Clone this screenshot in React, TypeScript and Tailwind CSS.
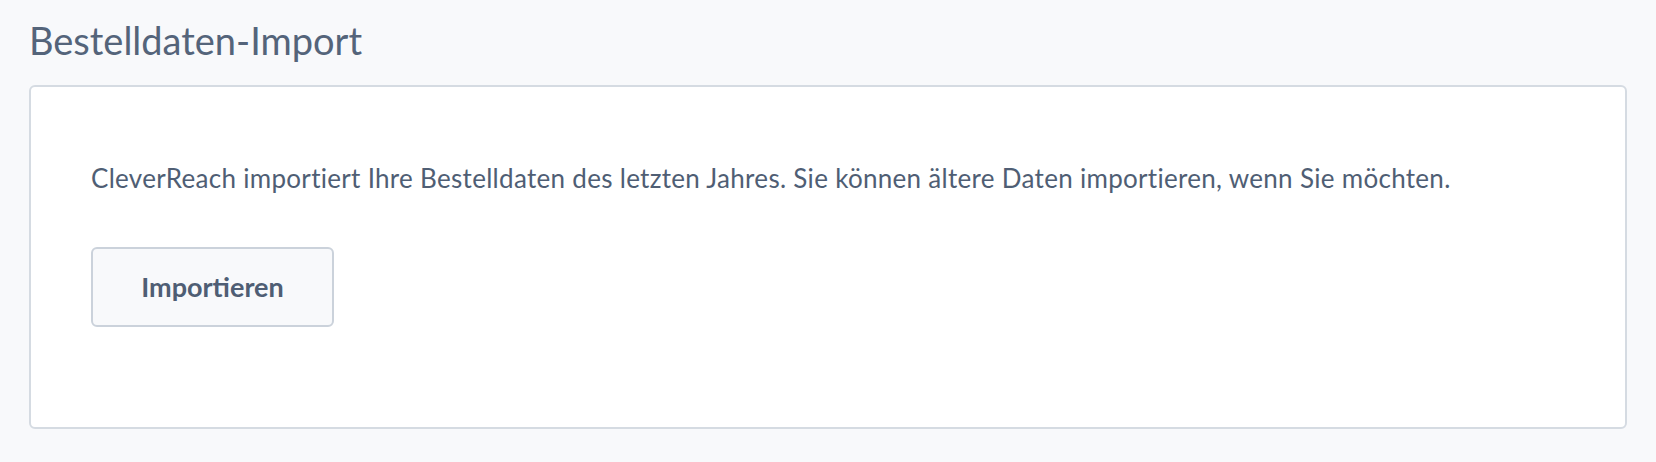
export default function App() {
  return (
    <div className="min-h-[462px] w-full bg-[#f8f9fb] px-[29px] pt-[16px] pb-[33px]" style={{ fontFamily: '"Lato", "Noto Sans", sans-serif' }}>
      <h1 className="text-[38px] leading-[48px] text-[#54647a] font-normal">Bestelldaten-Import</h1>
      <div className="mt-[21px] h-[344px] rounded-[6px] border-2 border-[#d5dbe2] bg-white pl-[60px] pt-[74px]">
        <p className="text-[26px] leading-[34px] tracking-[0.3px] text-[#4f5e74]">
          CleverReach importiert Ihre Bestelldaten des letzten Jahres. Sie können ältere Daten importieren, wenn Sie möchten.
        </p>
        <button className="mt-[52px] flex h-[80px] w-[243px] items-center justify-center rounded-[6px] border-2 border-[#cbd2db] bg-[#f8f9fb] text-[27px] font-bold text-[#4f5e74]">
          Importieren
        </button>
      </div>
    </div>
  );
}
